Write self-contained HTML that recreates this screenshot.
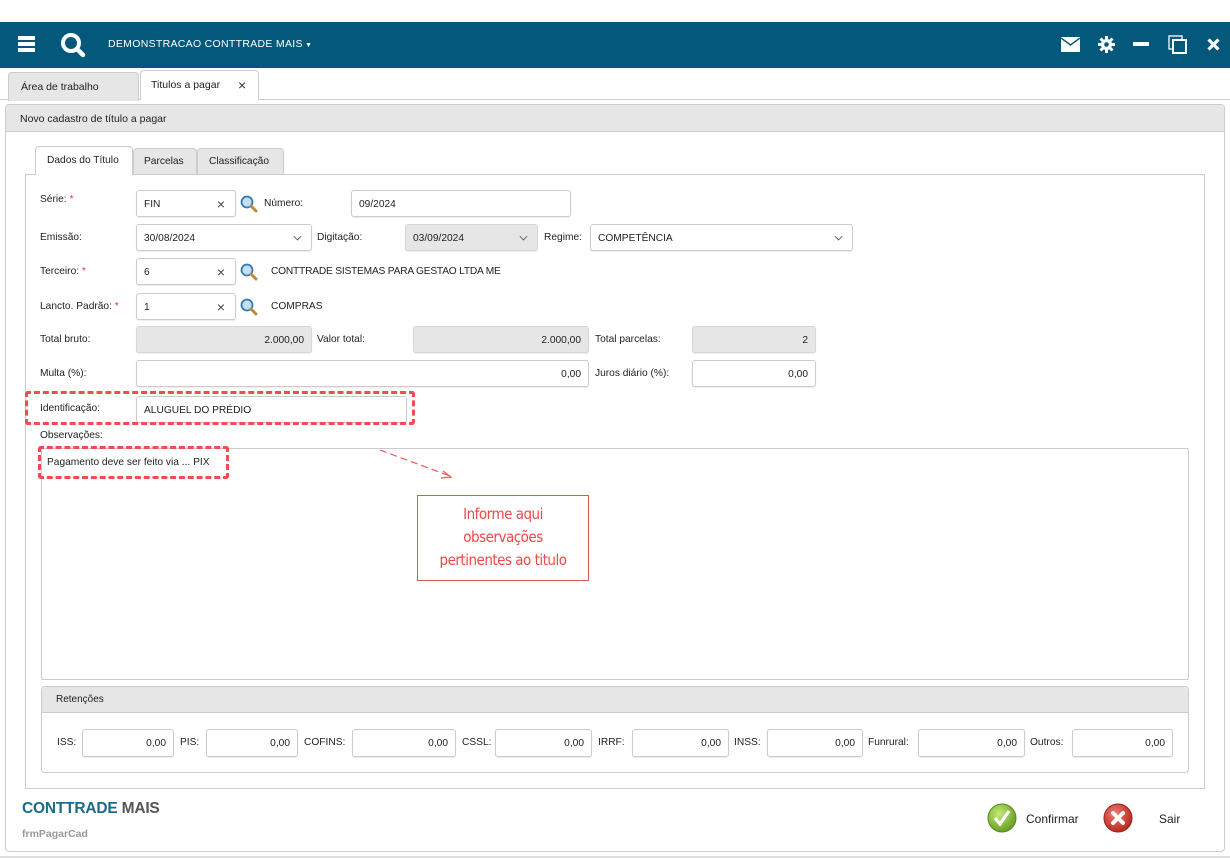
<!DOCTYPE html>
<html><head><meta charset="utf-8"><style>
*{box-sizing:border-box;margin:0;padding:0}
body{width:1230px;height:858px;background:#fff;font-family:"Liberation Sans",sans-serif;font-size:10px;color:#222;position:relative;overflow:hidden}
.a{position:absolute}
.nav{left:0;top:22px;width:1230px;height:46px;background:#03587b}
.lbl{position:absolute;font-size:10.2px;color:#222;white-space:nowrap}
.req{color:#e33}
.in{position:absolute;height:27px;border:1px solid #ccc;border-radius:3px;background:#fff;font-size:10.2px;line-height:27px;padding:0 7px;white-space:nowrap;box-shadow:0 1px 1px rgba(0,0,0,.08)}
.g{background:#e6e6e6;border-color:#d6d6d6}
.r{text-align:right}
.x{position:absolute;right:10px;top:0;font-size:14px;color:#444}
.chev{position:absolute;right:10px;top:8px;width:7px;height:7px;border-right:1.2px solid #555;border-bottom:1.2px solid #555;transform:rotate(45deg) scale(.8)}
.tab{position:absolute;height:29px;border:1px solid #ccc;border-bottom:none;border-radius:4px 4px 0 0;background:#e6e6e6;font-size:10.2px;line-height:29px;padding-left:12px}
.dash{position:absolute;border:3px dashed #f04e4e;border-radius:3px}
</style></head><body>
<div class="a nav"></div>
<div class="a" style="left:18px;top:36px;width:17px;height:4px;background:#fff"></div>
<div class="a" style="left:18px;top:42px;width:17px;height:4px;background:#fff"></div>
<div class="a" style="left:18px;top:48px;width:17px;height:4px;background:#fff"></div>
<svg class="a" style="left:60px;top:32px" width="26" height="26" viewBox="0 0 26 26"><circle cx="11" cy="11" r="8" fill="none" stroke="#fff" stroke-width="4"/><path d="M17 17 L23 23" stroke="#fff" stroke-width="4.5" stroke-linecap="round"/></svg>
<div class="a" style="left:108px;top:38px;color:#fff;font-size:10.5px;letter-spacing:.3px">DEMONSTRACAO CONTTRADE MAIS<span style="font-size:7px"> ▼</span></div>
<svg class="a" style="left:1061px;top:37px" width="19" height="15" viewBox="0 0 19 15"><rect x="0" y="0" width="19" height="15" fill="#fff"/><path d="M0 1 L9.5 8 L19 1" fill="none" stroke="#03587b" stroke-width="1.5"/></svg>
<svg class="a" style="left:1098px;top:36px" width="17" height="17" viewBox="0 0 17 17"><circle cx="8.5" cy="8.5" r="5.5" fill="#fff"/><g stroke="#fff" stroke-width="3"><path d="M8.5 0v17M0 8.5h17M2.5 2.5l12 12M14.5 2.5l-12 12"/></g><circle cx="8.5" cy="8.5" r="2.3" fill="#03587b"/></svg>
<div class="a" style="left:1133px;top:42px;width:16px;height:4px;background:#fff"></div>
<svg class="a" style="left:1168px;top:35px" width="20" height="20" viewBox="0 0 20 20"><rect x="1" y="1" width="13" height="13" fill="none" stroke="#fff" stroke-width="1.3"/><rect x="5" y="5" width="13" height="13" fill="#03587b" stroke="#fff" stroke-width="2"/></svg>
<svg class="a" style="left:1207px;top:38px" width="13" height="13" viewBox="0 0 13 13"><path d="M1.5 1.5L11.5 11.5M11.5 1.5L1.5 11.5" stroke="#fff" stroke-width="3.2"/></svg>
<div class="a" style="left:0;top:99px;width:1230px;height:1px;background:#ccc"></div>
<div class="tab" style="left:8px;top:72px;width:131px;font-size:10.5px">Área de trabalho</div>
<div class="tab" style="left:140px;top:70px;width:119px;height:30px;background:#fff;padding-left:10px;font-size:10.5px">Titulos a pagar<span style="position:absolute;left:97px;font-size:14px;color:#333">×</span></div>
<div class="a" style="left:5px;top:104px;width:1220px;height:748px;border:1px solid #ccc;border-radius:4px"></div>
<div class="a" style="left:6px;top:105px;width:1218px;height:27px;background:#e6e6e6;border-bottom:1px solid #ccc;border-radius:4px 4px 0 0;padding-left:14px;line-height:28px;font-size:10.5px">Novo cadastro de título a pagar</div>
<div class="a" style="left:25px;top:174px;width:1180px;height:615px;border:1px solid #ccc"></div>
<div class="tab" style="left:35px;top:146px;width:98px;height:29px;background:#fff;padding-left:11px;line-height:28px">Dados do Título</div>
<div class="tab" style="left:133px;top:148px;width:64px;height:26px;line-height:26px;padding-left:10px">Parcelas</div>
<div class="tab" style="left:197px;top:148px;width:87px;height:26px;line-height:26px;padding-left:11px">Classificação</div>
<div class="lbl" style="left:40px;top:194px">Série: <span class="req">*</span></div>
<div class="in" style="left:136px;top:190px;width:100px">FIN<span class="x">×</span></div>
<svg class="a" style="left:240px;top:195px" width="18" height="18" viewBox="0 0 18 18"><circle cx="7" cy="7" r="5.5" fill="#bfe0f5" stroke="#3a78b0" stroke-width="1.8"/><path d="M11 11l5 5" stroke="#c08a3a" stroke-width="3" stroke-linecap="round"/></svg>
<div class="lbl" style="left:264px;top:198px">Número:</div>
<div class="in" style="left:351px;top:190px;width:220px">09/2024</div>
<div class="lbl" style="left:40px;top:232px">Emissão:</div>
<div class="in" style="left:136px;top:224px;width:176px">30/08/2024<span class="chev"></span></div>
<div class="lbl" style="left:317px;top:232px">Digitação:</div>
<div class="in g" style="left:405px;top:224px;width:133px">03/09/2024<span class="chev"></span></div>
<div class="lbl" style="left:544px;top:232px">Regime:</div>
<div class="in" style="left:590px;top:224px;width:263px">COMPETÊNCIA<span class="chev"></span></div>
<div class="lbl" style="left:40px;top:266px">Terceiro: <span class="req">*</span></div>
<div class="in" style="left:136px;top:258px;width:100px">6<span class="x">×</span></div>
<svg class="a" style="left:240px;top:263px" width="18" height="18" viewBox="0 0 18 18"><circle cx="7" cy="7" r="5.5" fill="#bfe0f5" stroke="#3a78b0" stroke-width="1.8"/><path d="M11 11l5 5" stroke="#c08a3a" stroke-width="3" stroke-linecap="round"/></svg>
<div class="lbl" style="left:271px;top:266px;letter-spacing:-.2px">CONTTRADE SISTEMAS PARA GESTAO LTDA ME</div>
<div class="lbl" style="left:40px;top:301px">Lancto. Padrão: <span class="req">*</span></div>
<div class="in" style="left:136px;top:293px;width:100px">1<span class="x">×</span></div>
<svg class="a" style="left:240px;top:298px" width="18" height="18" viewBox="0 0 18 18"><circle cx="7" cy="7" r="5.5" fill="#bfe0f5" stroke="#3a78b0" stroke-width="1.8"/><path d="M11 11l5 5" stroke="#c08a3a" stroke-width="3" stroke-linecap="round"/></svg>
<div class="lbl" style="left:271px;top:301px">COMPRAS</div>
<div class="lbl" style="left:40px;top:334px">Total bruto:</div>
<div class="in g r" style="left:136px;top:326px;width:176px">2.000,00</div>
<div class="lbl" style="left:317px;top:334px">Valor total:</div>
<div class="in g r" style="left:413px;top:326px;width:176px">2.000,00</div>
<div class="lbl" style="left:595px;top:334px">Total parcelas:</div>
<div class="in g r" style="left:692px;top:326px;width:124px">2</div>
<div class="lbl" style="left:40px;top:368px">Multa (%):</div>
<div class="in r" style="left:136px;top:360px;width:453px">0,00</div>
<div class="lbl" style="left:595px;top:368px">Juros diário (%):</div>
<div class="in r" style="left:692px;top:360px;width:124px">0,00</div>
<div class="in" style="left:136px;top:396px;width:271px">ALUGUEL DO PRÉDIO</div>
<div class="dash" style="left:25px;top:391px;width:390px;height:34px"></div>
<div class="lbl" style="left:40px;top:403px">Identificação:</div>
<div class="lbl" style="left:40px;top:430px">Observações:</div>
<div class="a" style="left:41px;top:448px;width:1148px;height:232px;border:1px solid #ccc;border-radius:2px"></div>
<div class="lbl" style="left:47px;top:457px">Pagamento deve ser feito via ... PIX</div>
<div class="dash" style="left:38px;top:446px;width:191px;height:33px"></div>
<svg class="a" style="left:375px;top:445px" width="85" height="40" viewBox="0 0 85 40"><path d="M5 5 L75 31" stroke="#f05a5a" stroke-width="1.2" stroke-dasharray="7 4"/><path d="M68 26 L76 32 L66 33" fill="none" stroke="#f05a5a" stroke-width="1.2"/></svg>
<div class="a" style="left:417px;top:495px;width:172px;height:86px;border:1.5px solid #d45a5a;color:#f04848;font-family:'DejaVu Sans Condensed','Liberation Sans Narrow',sans-serif;font-size:15px;text-align:center;line-height:23px;padding-top:7px;letter-spacing:-.5px">Informe aqui<br>observações<br>pertinentes ao titulo</div>
<div class="a" style="left:41px;top:686px;width:1148px;height:87px;border:1px solid #ccc;border-radius:4px"></div>
<div class="a" style="left:42px;top:687px;width:1146px;height:26px;background:#e6e6e6;border-bottom:1px solid #ccc;border-radius:4px 4px 0 0;line-height:26px;padding-left:14px">Retenções</div>
<div class="lbl" style="left:57px;top:737px">ISS:</div><div class="in r" style="left:82px;top:729px;width:92px;height:28px">0,00</div>
<div class="lbl" style="left:180px;top:737px">PIS:</div><div class="in r" style="left:206px;top:729px;width:92px;height:28px">0,00</div>
<div class="lbl" style="left:304px;top:737px">COFINS:</div><div class="in r" style="left:352px;top:729px;width:104px;height:28px">0,00</div>
<div class="lbl" style="left:462px;top:737px">CSSL:</div><div class="in r" style="left:495px;top:729px;width:97px;height:28px">0,00</div>
<div class="lbl" style="left:598px;top:737px">IRRF:</div><div class="in r" style="left:632px;top:729px;width:97px;height:28px">0,00</div>
<div class="lbl" style="left:734px;top:737px">INSS:</div><div class="in r" style="left:767px;top:729px;width:96px;height:28px">0,00</div>
<div class="lbl" style="left:868px;top:737px">Funrural:</div><div class="in r" style="left:918px;top:729px;width:107px;height:28px">0,00</div>
<div class="lbl" style="left:1030px;top:737px">Outros:</div><div class="in r" style="left:1072px;top:729px;width:101px;height:28px">0,00</div>
<div class="a" style="left:22px;top:800px;font-size:15.5px;font-weight:bold;letter-spacing:-.2px"><span style="color:#1c6a8a">CONTTRADE</span> <span style="color:#555">MAIS</span></div>
<div class="a" style="left:22px;top:828px;font-size:10.5px;font-weight:bold;color:#999">frmPagarCad</div>
<svg class="a" style="left:987px;top:803px" width="30" height="30" viewBox="0 0 30 30"><defs><radialGradient id="gg" cx=".4" cy=".35" r=".7"><stop offset="0" stop-color="#c8ea7a"/><stop offset="1" stop-color="#5f9a1c"/></radialGradient><radialGradient id="rr" cx=".4" cy=".35" r=".7"><stop offset="0" stop-color="#f07a70"/><stop offset="1" stop-color="#b3241c"/></radialGradient></defs><circle cx="15" cy="15" r="14" fill="url(#gg)" stroke="#5a8a1a"/><path d="M8 15 L13 21 L22 8" fill="none" stroke="#fff" stroke-width="3.2"/></svg>
<div class="a" style="left:1026px;top:812px;font-size:12px;color:#222">Confirmar</div>
<svg class="a" style="left:1103px;top:803px" width="30" height="30" viewBox="0 0 30 30"><circle cx="15" cy="15" r="14" fill="url(#rr)" stroke="#a02018"/><path d="M10 10 L20 20 M20 10 L10 20" stroke="#fff" stroke-width="4" stroke-linecap="round"/></svg>
<div class="a" style="left:1159px;top:812px;font-size:12px;color:#222">Sair</div>
<div class="a" style="left:0;top:856px;width:1230px;height:2px;background:#ddd"></div>
</body></html>
